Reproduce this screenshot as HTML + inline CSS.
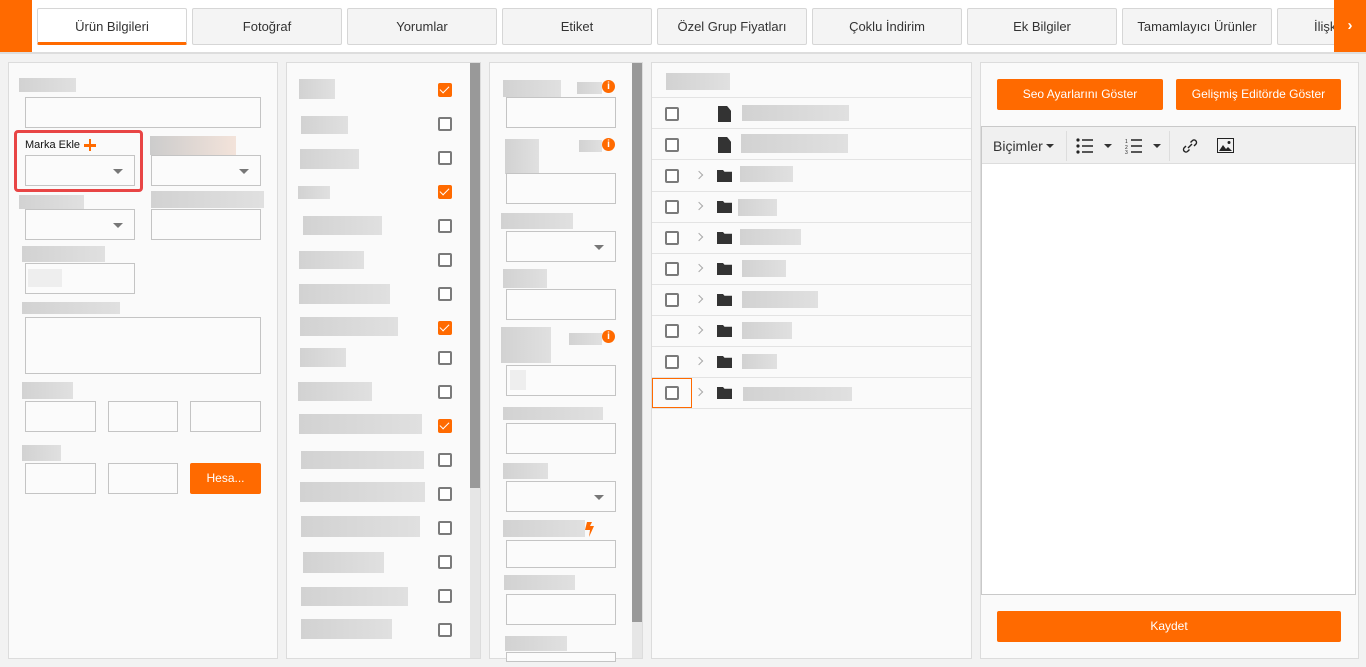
<!DOCTYPE html><html><head><meta charset="utf-8"><style>
*{box-sizing:border-box;margin:0;padding:0}
body{width:1366px;height:667px;overflow:hidden;background:#f2f2f2;font-family:"Liberation Sans",sans-serif;position:relative}
div,span{position:absolute}
.top{left:0;top:0;width:1366px;height:54px;background:#fff;border-bottom:2px solid #ddd}
.tab{top:8px;height:37px;width:150px;background:#f4f4f4;border:1px solid #d6d6d6;border-radius:2px;font-size:13px;color:#333;text-align:center;line-height:35px;overflow:hidden;white-space:nowrap}
.p{background:#fafafa;border:1px solid #dcdcdc;top:62px;height:597px}
.b{background:linear-gradient(90deg,#d2d2d2,#e0e0e0)}
.in{border:1px solid #c4c4c4;background:#fbfbfb}
.sel::after{content:"";position:absolute;right:11px;top:13px;border-left:5px solid transparent;border-right:5px solid transparent;border-top:5px solid #777}
.cb{width:14px;height:14px;border:2px solid #7a7a7a;border-radius:2px;background:#fff}
.ck{width:14px;height:14px;background:#ff6a00;border-radius:2px}
.ck::after{content:"";position:absolute;left:4px;top:1px;width:4px;height:8px;border-right:1.5px solid #fff;border-bottom:1.5px solid #fff;transform:rotate(45deg)}
.btn{background:#ff6a00;color:#fff;font-size:12px;text-align:center;border-radius:2px}
.info{width:13px;height:13px;border-radius:50%;background:#ff6a00;color:#fff;font-size:10px;font-weight:bold;text-align:center;line-height:13px}
.row{left:0;width:319px;height:1px;background:#e3e3e3}
.doc{width:13px;height:16px;background:#333;clip-path:polygon(0 0,70% 0,100% 30%,100% 100%,0 100%)}
.fold{width:15px;height:12px;background:#333;clip-path:polygon(0 0,40% 0,50% 15%,100% 15%,100% 100%,0 100%)}
.chev{width:6px;height:6px;border-right:1.5px solid #aaa;border-top:1.5px solid #aaa;transform:rotate(45deg)}
</style></head><body>
<div class="top">
<div style="left:0;top:0;width:32px;height:52px;background:#ff6a00"></div>
<div class="tab" style="left:37px;background:#fff;border-bottom:3px solid #ff6a00">Ürün Bilgileri</div>
<div class="tab" style="left:192px">Fotoğraf</div>
<div class="tab" style="left:347px">Yorumlar</div>
<div class="tab" style="left:502px">Etiket</div>
<div class="tab" style="left:657px">Özel Grup Fiyatları</div>
<div class="tab" style="left:812px">Çoklu İndirim</div>
<div class="tab" style="left:967px">Ek Bilgiler</div>
<div class="tab" style="left:1122px">Tamamlayıcı Ürünler</div>
<div class="tab" style="left:1277px;text-align:left;padding-left:36px">İlişkili</div>
<div style="left:1334px;top:0;width:32px;height:52px;background:#ff6a00;color:#fff;font-size:15px;font-weight:bold;text-align:center;line-height:52px">›</div>
</div>

<!-- Panel 1 -->
<div class="p" style="left:8px;width:270px"></div>
<div class="b" style="left:19px;top:78px;width:57px;height:14px"></div>
<div class="in" style="left:25px;top:97px;width:236px;height:31px"></div>
<div style="left:14px;top:130px;width:129px;height:62px;border:3px solid #e84545;border-radius:4px"></div>
<div style="left:25px;top:139px;font-size:11px;color:#111">Marka Ekle</div>
<div style="left:84px;top:144px;width:12px;height:2.5px;background:#ff6a00"></div>
<div style="left:88.75px;top:139px;width:2.5px;height:12px;background:#ff6a00"></div>
<div class="in sel" style="left:25px;top:155px;width:110px;height:31px"></div>
<div style="left:150px;top:136px;width:86px;height:19px;background:linear-gradient(90deg,#ccc,#f3e3da)"></div>
<div class="in sel" style="left:151px;top:155px;width:110px;height:31px"></div>
<div class="b" style="left:19px;top:195px;width:65px;height:14px"></div>
<div class="b" style="left:151px;top:191px;width:113px;height:17px"></div>
<div class="in sel" style="left:25px;top:209px;width:110px;height:31px"></div>
<div class="in" style="left:151px;top:209px;width:110px;height:31px"></div>
<div class="b" style="left:22px;top:246px;width:83px;height:16px"></div>
<div class="in" style="left:25px;top:263px;width:110px;height:31px"></div>
<div style="left:28px;top:269px;width:34px;height:18px;background:#eee"></div>
<div class="b" style="left:22px;top:302px;width:98px;height:12px"></div>
<div class="in" style="left:25px;top:317px;width:236px;height:57px"></div>
<div class="b" style="left:22px;top:382px;width:51px;height:17px"></div>
<div class="in" style="left:25px;top:401px;width:71px;height:31px"></div>
<div class="in" style="left:108px;top:401px;width:70px;height:31px"></div>
<div class="in" style="left:190px;top:401px;width:71px;height:31px"></div>
<div class="b" style="left:22px;top:445px;width:39px;height:16px"></div>
<div class="in" style="left:25px;top:463px;width:71px;height:31px"></div>
<div class="in" style="left:108px;top:463px;width:70px;height:31px"></div>
<div class="btn" style="left:190px;top:463px;width:71px;height:31px;line-height:31px">Hesa...</div>

<!-- Panel 2 -->
<div class="p" style="left:286px;width:195px"></div>
<div style="left:470px;top:63px;width:10px;height:595px;background:#e6e6e6"></div>
<div style="left:470px;top:63px;width:10px;height:425px;background:#999"></div>
<div class="b" style="left:299px;top:79px;width:36px;height:20px"></div><div class="ck" style="left:438px;top:83px"></div>
<div class="b" style="left:301px;top:116px;width:47px;height:18px"></div><div class="cb" style="left:438px;top:117px"></div>
<div class="b" style="left:300px;top:149px;width:59px;height:20px"></div><div class="cb" style="left:438px;top:151px"></div>
<div class="b" style="left:298px;top:186px;width:32px;height:13px"></div><div class="ck" style="left:438px;top:185px"></div>
<div class="b" style="left:303px;top:216px;width:79px;height:19px"></div><div class="cb" style="left:438px;top:219px"></div>
<div class="b" style="left:299px;top:251px;width:65px;height:18px"></div><div class="cb" style="left:438px;top:253px"></div>
<div class="b" style="left:299px;top:284px;width:91px;height:20px"></div><div class="cb" style="left:438px;top:287px"></div>
<div class="b" style="left:300px;top:317px;width:98px;height:19px"></div><div class="ck" style="left:438px;top:321px"></div>
<div class="b" style="left:300px;top:348px;width:46px;height:19px"></div><div class="cb" style="left:438px;top:351px"></div>
<div class="b" style="left:298px;top:382px;width:74px;height:19px"></div><div class="cb" style="left:438px;top:385px"></div>
<div class="b" style="left:299px;top:414px;width:123px;height:20px"></div><div class="ck" style="left:438px;top:419px"></div>
<div class="b" style="left:301px;top:451px;width:123px;height:18px"></div><div class="cb" style="left:438px;top:453px"></div>
<div class="b" style="left:300px;top:482px;width:125px;height:20px"></div><div class="cb" style="left:438px;top:487px"></div>
<div class="b" style="left:301px;top:516px;width:119px;height:21px"></div><div class="cb" style="left:438px;top:521px"></div>
<div class="b" style="left:303px;top:552px;width:81px;height:21px"></div><div class="cb" style="left:438px;top:555px"></div>
<div class="b" style="left:301px;top:587px;width:107px;height:19px"></div><div class="cb" style="left:438px;top:589px"></div>
<div class="b" style="left:301px;top:619px;width:91px;height:20px"></div><div class="cb" style="left:438px;top:623px"></div>

<!-- Panel 3 -->
<div class="p" style="left:489px;width:154px"></div>
<div style="left:632px;top:63px;width:10px;height:595px;background:#e6e6e6"></div>
<div style="left:632px;top:63px;width:10px;height:559px;background:#999"></div>
<div class="b" style="left:503px;top:80px;width:58px;height:17px"></div><div class="b" style="left:577px;top:82px;width:25px;height:12px"></div><div class="info" style="left:602px;top:80px">i</div>
<div class="in" style="left:506px;top:97px;width:110px;height:31px"></div>
<div class="b" style="left:505px;top:139px;width:34px;height:35px"></div><div class="b" style="left:579px;top:140px;width:23px;height:12px"></div><div class="info" style="left:602px;top:138px">i</div>
<div class="in" style="left:506px;top:173px;width:110px;height:31px"></div>
<div class="b" style="left:501px;top:213px;width:72px;height:16px"></div>
<div class="in sel" style="left:506px;top:231px;width:110px;height:31px"></div>
<div class="b" style="left:503px;top:269px;width:44px;height:19px"></div>
<div class="in" style="left:506px;top:289px;width:110px;height:31px"></div>
<div class="b" style="left:501px;top:327px;width:50px;height:36px"></div><div class="b" style="left:569px;top:333px;width:33px;height:12px"></div><div class="info" style="left:602px;top:330px">i</div>
<div class="in" style="left:506px;top:365px;width:110px;height:31px"></div><div style="left:510px;top:370px;width:16px;height:20px;background:#eee"></div>
<div class="b" style="left:503px;top:407px;width:100px;height:13px"></div>
<div class="in" style="left:506px;top:423px;width:110px;height:31px"></div>
<div class="b" style="left:503px;top:463px;width:45px;height:16px"></div>
<div class="in sel" style="left:506px;top:481px;width:110px;height:31px"></div>
<div class="b" style="left:503px;top:520px;width:82px;height:17px"></div>
<svg style="position:absolute;left:585px;top:522px" width="10" height="15" viewBox="0 0 10 15"><path d="M2 0h5L5 4h4L4 15l1-7H0z" fill="#ff6a00"/></svg>
<div class="in" style="left:506px;top:540px;width:110px;height:28px"></div>
<div class="b" style="left:504px;top:575px;width:71px;height:15px"></div>
<div class="in" style="left:506px;top:594px;width:110px;height:31px"></div>
<div class="b" style="left:505px;top:636px;width:62px;height:15px"></div>
<div class="in" style="left:506px;top:652px;width:110px;height:10px"></div>

<!-- Panel 4 -->
<div class="p" style="left:651px;width:321px">
<div class="b" style="left:14px;top:10px;width:64px;height:17px"></div>
<div class="row" style="top:34px"></div><div class="row" style="top:65px"></div><div class="row" style="top:96px"></div><div class="row" style="top:128px"></div><div class="row" style="top:159px"></div><div class="row" style="top:190px"></div><div class="row" style="top:221px"></div><div class="row" style="top:252px"></div><div class="row" style="top:283px"></div><div class="row" style="top:314px"></div><div class="row" style="top:345px"></div>
</div>
<div class="cb" style="left:665px;top:107px"></div><div class="doc" style="left:718px;top:106px"></div><div class="b" style="left:742px;top:105px;width:107px;height:16px"></div>
<div class="cb" style="left:665px;top:138px"></div><div class="doc" style="left:718px;top:137px"></div><div class="b" style="left:741px;top:134px;width:107px;height:19px"></div>
<div class="cb" style="left:665px;top:169px"></div><div class="chev" style="left:696px;top:172px"></div><div class="fold" style="left:717px;top:170px"></div><div class="b" style="left:740px;top:166px;width:53px;height:16px"></div>
<div class="cb" style="left:665px;top:200px"></div><div class="chev" style="left:696px;top:203px"></div><div class="fold" style="left:717px;top:201px"></div><div class="b" style="left:738px;top:199px;width:39px;height:17px"></div>
<div class="cb" style="left:665px;top:231px"></div><div class="chev" style="left:696px;top:234px"></div><div class="fold" style="left:717px;top:232px"></div><div class="b" style="left:740px;top:229px;width:61px;height:16px"></div>
<div class="cb" style="left:665px;top:262px"></div><div class="chev" style="left:696px;top:265px"></div><div class="fold" style="left:717px;top:263px"></div><div class="b" style="left:742px;top:260px;width:44px;height:17px"></div>
<div class="cb" style="left:665px;top:293px"></div><div class="chev" style="left:696px;top:296px"></div><div class="fold" style="left:717px;top:294px"></div><div class="b" style="left:742px;top:291px;width:76px;height:17px"></div>
<div class="cb" style="left:665px;top:324px"></div><div class="chev" style="left:696px;top:327px"></div><div class="fold" style="left:717px;top:325px"></div><div class="b" style="left:742px;top:322px;width:50px;height:17px"></div>
<div class="cb" style="left:665px;top:355px"></div><div class="chev" style="left:696px;top:358px"></div><div class="fold" style="left:717px;top:356px"></div><div class="b" style="left:742px;top:354px;width:35px;height:15px"></div>
<div style="left:652px;top:378px;width:40px;height:30px;border:1px solid #ff6a00"></div>
<div class="cb" style="left:665px;top:386px"></div><div class="chev" style="left:696px;top:389px"></div><div class="fold" style="left:717px;top:387px"></div><div class="b" style="left:743px;top:387px;width:109px;height:14px"></div>

<!-- Panel 5 -->
<div class="p" style="left:980px;width:379px"></div>
<div class="btn" style="left:997px;top:79px;width:166px;height:31px;line-height:31px">Seo Ayarlarını Göster</div>
<div class="btn" style="left:1176px;top:79px;width:165px;height:31px;line-height:31px">Gelişmiş Editörde Göster</div>
<div style="left:981px;top:126px;width:375px;height:469px;background:#fff;border:1px solid #c9c9c9"></div>
<div style="left:982px;top:127px;width:373px;height:37px;background:#f0f0f0;border-bottom:1px solid #ddd"></div>
<div style="left:993px;top:138px;font-size:14px;color:#333">Biçimler</div>
<div style="left:1046px;top:144px;border-left:4px solid transparent;border-right:4px solid transparent;border-top:4px solid #333"></div>
<div style="left:1066px;top:131px;width:1px;height:30px;background:#ddd"></div>
<svg style="position:absolute;left:1076px;top:138px" width="18" height="16" viewBox="0 0 18 16"><circle cx="2" cy="2" r="1.6" fill="#222"/><circle cx="2" cy="8" r="1.6" fill="#222"/><circle cx="2" cy="14" r="1.6" fill="#222"/><path d="M6 2h11M6 8h11M6 14h11" stroke="#222" stroke-width="1.6"/></svg>
<div style="left:1104px;top:144px;border-left:4px solid transparent;border-right:4px solid transparent;border-top:4px solid #333"></div>
<svg style="position:absolute;left:1125px;top:138px" width="18" height="16" viewBox="0 0 18 16"><text x="0" y="5" font-size="5" font-family="Liberation Sans" fill="#222">1</text><text x="0" y="11" font-size="5" font-family="Liberation Sans" fill="#222">2</text><text x="0" y="16" font-size="5" font-family="Liberation Sans" fill="#222">3</text><path d="M6 2h11M6 8h11M6 14h11" stroke="#222" stroke-width="1.6"/></svg>
<div style="left:1153px;top:144px;border-left:4px solid transparent;border-right:4px solid transparent;border-top:4px solid #333"></div>
<div style="left:1169px;top:131px;width:1px;height:30px;background:#ddd"></div>
<svg style="position:absolute;left:1181px;top:137px" width="18" height="18" viewBox="0 0 18 18"><path d="M7 11l4-4M5 9l-2 2a2.5 2.5 0 003.5 3.5l2-2M13 9l2-2A2.5 2.5 0 0011.5 3.5l-2 2" fill="none" stroke="#222" stroke-width="1.4"/></svg>
<svg style="position:absolute;left:1217px;top:138px" width="17" height="15" viewBox="0 0 17 15"><rect x="0.5" y="0.5" width="16" height="14" fill="none" stroke="#222"/><path d="M2 13l4-6 3 4 2-2 4 4z" fill="#222"/><circle cx="12" cy="4.5" r="1.5" fill="#222"/></svg>
<div class="btn" style="left:997px;top:611px;width:344px;height:31px;line-height:31px">Kaydet</div>
</body></html>
